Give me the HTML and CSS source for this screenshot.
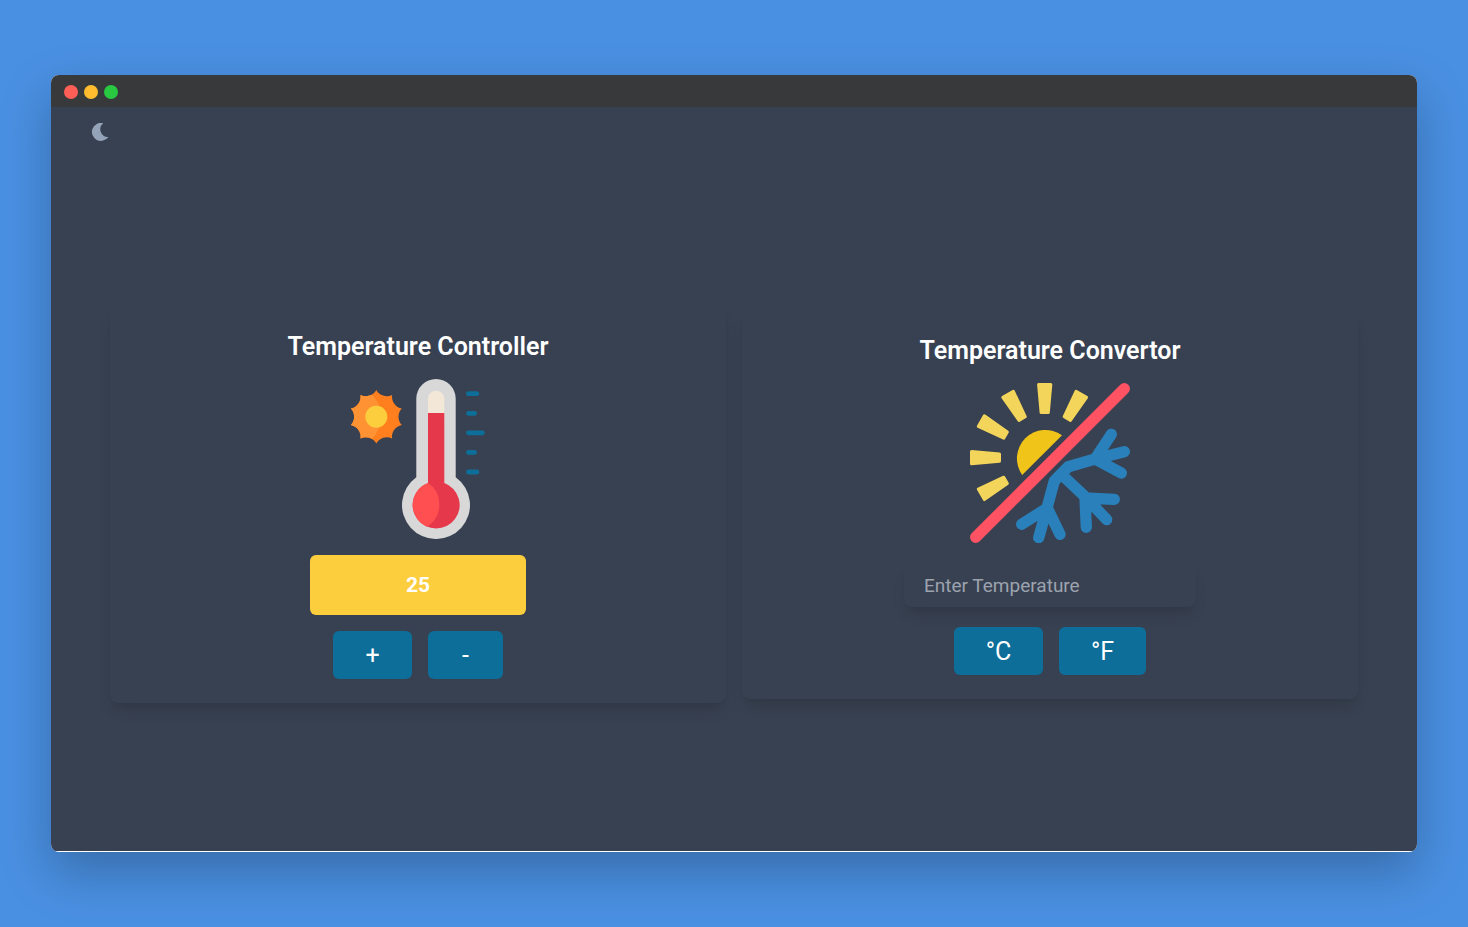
FILE: index.html
```
<!DOCTYPE html>
<html lang="en">
<head>
<meta charset="utf-8">
<meta name="viewport" content="width=device-width, initial-scale=1">
<title>Temperature</title>
<link rel="stylesheet" href="styles.css">
</head>
<body>
<div class="window">
  <div class="titlebar">
    <span class="dot dot-red"></span>
    <span class="dot dot-yellow"></span>
    <span class="dot dot-green"></span>
  </div>
  <div class="app">
    <header class="header">
      <button class="theme-toggle" type="button" aria-label="Toggle dark mode">
        <svg viewBox="0 0 20 20" width="20" height="20"><path fill="#94a3b8" d="M12.2 .2A9 9 0 1 0 17.4 13.9A7.7 7.7 0 0 1 12.2 .2Z"/></svg>
      </button>
    </header>
    <main class="cards">
      <section class="card">
        <h2 class="title">Temperature Controller</h2>
        <svg class="picture" viewBox="0 0 160 160" aria-hidden="true">
          <clipPath id="sun"><path d="M38.3 10.9A12 12 0 0 0 54.1 16A12 12 0 0 0 63.8 29.4A12 12 0 0 0 63.8 46A12 12 0 0 0 54.1 59.4A12 12 0 0 0 38.3 64.5A12 12 0 0 0 22.5 59.4A12 12 0 0 0 12.8 46A12 12 0 0 0 12.8 29.4A12 12 0 0 0 22.5 16A12 12 0 0 0 38.3 10.9Z"/></clipPath>
          <g clip-path="url(#sun)">
            <path fill="#ff7f1f" d="M0 0H80V80H0Z"/>
            <path fill="#ff9233" d="M0 0H20L32 14Q43 23 43 38Q43 52 32 62L20 80H0Z"/>
          </g>
          <circle cx="38.3" cy="37.7" r="11" fill="#fcce3d"/>
          <path fill="#d8d8d8" d="M78.3 19.7A19.7 19.7 0 0 1 117.7 19.7V98.3A34 34 0 1 1 78.3 98.3Z"/>
          <path fill="#f3e8d7" d="M90 19A8.2 8.2 0 0 1 106.3 19V40H90Z"/>
          <path fill="#e5384b" d="M90 34H106.3V104A23.5 23.5 0 1 1 90 104Z"/>
          <path fill="#ff4f50" d="M90 104Q101.3 111 101.3 125.5Q101.3 140 89 147.7A23.5 23.5 0 0 1 90 104Z"/>
          <path stroke="#0c6e99" stroke-width="4.8" stroke-linecap="round" d="M130.4 14.7H138.9M130.4 34.3H136.6M130.4 53.8H144.4M130.4 73.4H136.6M130.4 93H138.9"/>
        </svg>
        <output class="reading">25</output>
        <div class="actions">
          <button class="button button-plus" type="button">+</button>
          <button class="button button-minus" type="button">-</button>
        </div>
      </section>
      <section class="card">
        <h2 class="title">Temperature Convertor</h2>
        <svg class="picture" viewBox="0 0 160 160" aria-hidden="true">
          <defs><path id="ray" d="M68.6 1.5H80.8L78.3 29.5H71.1Z"/></defs>
          <g fill="#f3d55b" stroke="#f3d55b" stroke-width="3" stroke-linejoin="round">
            <use href="#ray"/>
            <use href="#ray" transform="rotate(30 74.7 74.7)"/>
            <use href="#ray" transform="rotate(-30 74.7 74.7)"/>
            <use href="#ray" transform="rotate(-60 74.7 74.7)"/>
            <use href="#ray" transform="rotate(-90 74.7 74.7)"/>
            <use href="#ray" transform="rotate(-120 74.7 74.7)"/>
          </g>
          <path fill="#f0c419" d="M92 52.3A28.5 28.5 0 0 0 52.2 92Z"/>
          <path fill="none" stroke="#2980ba" stroke-width="11.3" stroke-linecap="round" stroke-linejoin="round" d="M154.3 68.7L125 76L98.3 83.7L84.3 98L77.3 123.7L68.7 154.7M141.3 51.3L125 76L151.3 90M91 91L115 113.7L136.7 136.7M144.3 116.3L115 115L116.3 144.3M51.7 141.3L77.3 125L90 151.3"/>
          <path stroke="#ff5364" stroke-width="11.3" stroke-linecap="round" d="M5.7 154.3L154.3 5.7"/>
        </svg>
        <input class="field" type="text" placeholder="Enter Temperature" aria-label="Enter Temperature">
        <div class="actions">
          <button class="button button-celsius" type="button">°C</button>
          <button class="button button-fahrenheit" type="button">°F</button>
        </div>
      </section>
    </main>
  </div>
</div>
</body>
</html>
```
FILE: styles.css
```
* {
  box-sizing: border-box;
}

body {
  margin: 0;
  min-height: 100vh;
  padding: 75px 51px;
  display: flex;
  background: #4a90e2;
  color: #fff;
  font-family: Roboto, "Liberation Sans", sans-serif;
}

.window {
  flex: 1;
  display: flex;
  flex-direction: column;
  border-radius: 8px;
  overflow: hidden;
  background: #fff;
  box-shadow: 0 20px 50px rgba(0, 0, 0, 0.25);
}

.titlebar {
  display: flex;
  align-items: center;
  gap: 6px;
  height: 32px;
  padding: 2px 13px 0;
  background: #37393a;
}

.dot {
  width: 14px;
  height: 14px;
  border-radius: 50%;
}

.dot-red { background: #ff5f57; }
.dot-yellow { background: #febc2e; }
.dot-green { background: #28c840; }

.app {
  flex: 1;
  display: flex;
  flex-direction: column;
  margin-bottom: 1px;
  background: #384151;
}

.header {
  display: flex;
  padding: 16px 40px;
}

.theme-toggle {
  display: flex;
  padding: 0;
  border: 0;
  background: none;
  cursor: pointer;
}

.cards {
  flex: 1;
  width: 100%;
  max-width: 1280px;
  margin: 0 auto;
  padding: 0 16px;
  display: grid;
  grid-template-columns: 1fr 1fr;
  align-items: center;
  gap: 16px;
}

.card {
  display: flex;
  flex-direction: column;
  align-items: center;
  padding: 24px;
  border-radius: 8px;
  box-shadow: 0 10px 15px -3px rgba(0, 0, 0, 0.1), 0 4px 6px -4px rgba(0, 0, 0, 0.1);
  background: #384151;
}

.title {
  margin: 0 0 16px;
  font-size: 25px;
  font-weight: 600;
  line-height: 32px;
}

.picture {
  width: 160px;
  height: 160px;
}

.reading {
  width: 216px;
  margin: 16px 0;
  border-radius: 6px;
  background: #fcce3d;
  font-size: 21px;
  font-weight: 700;
  line-height: 60px;
  text-align: center;
}

.field {
  width: 292px;
  height: 44px;
  margin: 20px 0;
  padding: 0 20px;
  border: 0;
  border-radius: 8px;
  background: #384151;
  box-shadow: 0 10px 15px -3px rgba(0, 0, 0, 0.1), 0 4px 6px -4px rgba(0, 0, 0, 0.1);
  color: #fff;
  font: inherit;
  font-size: 19px;
}

.field::placeholder {
  color: #9ca3af;
}

.actions {
  display: flex;
  gap: 16px;
}

.button {
  height: 48px;
  padding: 0;
  border: 0;
  border-radius: 6px;
  background: #0c6e99;
  color: #fff;
  font: inherit;
  font-size: 25px;
  cursor: pointer;
}

.button-plus { width: 79px; }
.button-minus { width: 75px; }
.button-celsius { width: 89px; }
.button-fahrenheit { width: 87px; }
```
